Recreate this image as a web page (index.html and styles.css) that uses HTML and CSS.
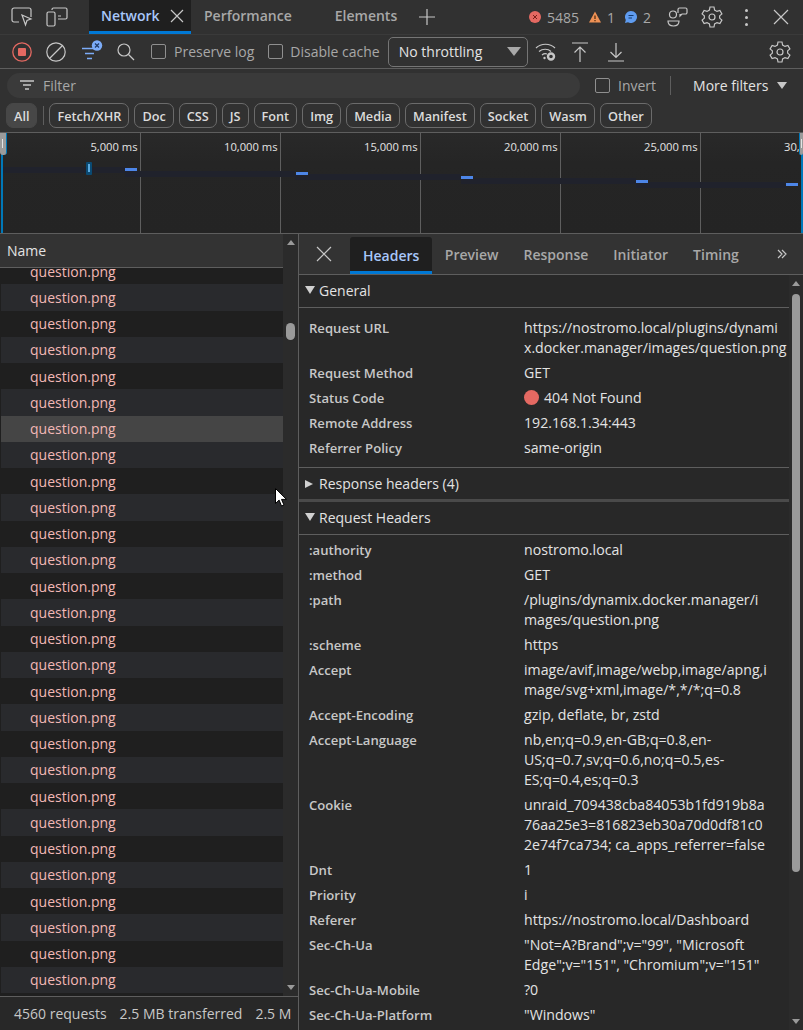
FILE: index.html
```html
<!DOCTYPE html>
<html lang="en">
<head>
<meta charset="UTF-8">
<meta name="viewport" content="width=device-width, initial-scale=1.0">
<link rel="stylesheet" href="styles.css">
<title>DevTools Network</title>
</head>
<body>
<div class="devtools">

  <!-- Main tab strip -->
  <div class="topbar">
    <svg class="ico ico-inspect" viewBox="0 0 22 20"><path d="M8 15H3a2 2 0 0 1-2-2V3a2 2 0 0 1 2-2h15a2 2 0 0 1 2 2v7"/><path d="M11 8l9 4-4 1.500-1.500 4.500z"/></svg>
    <svg class="ico ico-device" viewBox="0 0 22 20"><rect x="1" y="5" width="8" height="14" rx="1.500"/><path d="M6 3V2.500A1.500 1.500 0 0 1 7.500 1h12A1.500 1.500 0 0 1 21 2.500v8a1.500 1.500 0 0 1-1.500 1.500H12M12 9h3"/></svg>
    <div class="maintab active"><span>Network</span><svg class="ico ico-x14" viewBox="0 0 14 14"><path d="M1 1l12 12M13 1L1 13"/></svg></div>
    <div class="maintab perf">Performance</div>
    <div class="maintab elems">Elements</div>
    <svg class="ico ico-plus" viewBox="0 0 18 18"><path d="M9 1v16M1 9h16"/></svg>
    <div class="counts">
      <svg class="cnt-ico" viewBox="0 0 12 12"><circle cx="6" cy="6" r="6" fill="#e46962"/><path d="M4 4l4 4M8 4l-4 4" stroke="#7a1f1a" stroke-width="1"/></svg>
      <span class="cnt c1">5485</span>
      <svg class="cnt-ico" viewBox="0 0 12 12"><path d="M6 .5L12 11.500H0z" fill="#ee9155"/><path d="M6 4.500v3.500M6 9v1.200" stroke="#4a2508" stroke-width="1.200"/></svg>
      <span class="cnt c2">1</span>
      <svg class="cnt-ico" viewBox="0 0 12 12"><path d="M6 0a6 6 0 1 1-3 11.200L0 12l.8-3A6 6 0 0 1 6 0z" fill="#5f9cf0"/><path d="M3.500 4.500h5M3.500 7h3.500" stroke="#123a70" stroke-width="1"/></svg>
      <span class="cnt c3">2</span>
    </div>
    <svg class="ico ico-people" viewBox="0 0 21 20"><circle cx="6" cy="7.500" r="3.500"/><path d="M1 14h11c0 3-2 5-5.500 5S1 17 1 14z"/><path d="M11 6V2.500A1.500 1.500 0 0 1 12.500 1h6A1.500 1.500 0 0 1 20 2.500v3A1.500 1.500 0 0 1 18.500 7H15l-2 2V7"/></svg>
    <svg class="ico ico-gear top-gear" viewBox="0 0 22 22"><path d="M9 1h4l.6 3 2.400 1.400 2.900-1 2 3.500-2.300 2a7 7 0 0 1 0 2.200l2.300 2-2 3.500-2.900-1L13.600 18 13 21H9l-.6-3L6 16.600l-2.900 1-2-3.500 2.300-2a7 7 0 0 1 0-2.200l-2.300-2 2-3.500 2.900 1L8.400 4z"/><circle cx="11" cy="11" r="3"/></svg>
    <div class="dots"><i></i><i></i><i></i></div>
    <svg class="ico ico-x16" viewBox="0 0 16 16"><path d="M1 1l14 14M15 1L1 15"/></svg>
  </div>

  <!-- Network toolbar -->
  <div class="toolbar">
    <svg class="tool rec" viewBox="0 0 20 20"><circle cx="10" cy="10" r="9.200" fill="none" stroke="#e46962" stroke-width="1.300"/><rect x="6" y="6" width="8" height="8" rx="1" fill="#e46962"/></svg>
    <svg class="ico tool clear" viewBox="0 0 20 20"><circle cx="10" cy="10" r="9.200"/><path d="M3.500 16.500l13-13"/></svg>
    <svg class="tool funnel" viewBox="0 0 22 20"><path d="M1 8.500h13M4 13.500h9M6 18.500h5" stroke="#7cacf8" stroke-width="1.300" fill="none"/><circle cx="16" cy="5.500" r="5.200" fill="#7cacf8"/><path d="M14 3.500l4 4M18 3.500l-4 4" stroke="#1f3a66" stroke-width="1.200"/></svg>
    <svg class="ico tool search" viewBox="0 0 18 18"><circle cx="7" cy="7" r="6"/><path d="M11.500 11.500L17 17"/></svg>
    <label class="check preserve"><i></i>Preserve log</label>
    <label class="check cache"><i></i>Disable cache</label>
    <div class="select">No throttling<b class="arrow"></b></div>
    <svg class="ico tool wifi" viewBox="0 0 22 20"><path d="M1 6c5-5 14-5 19 0M4 9.500c3.500-3 9-3 12 0M7 13c1.500-1.200 3.500-1.500 5-1"/><circle cx="9.500" cy="16" r="1.200" fill="#c7c7c7" stroke="none"/><circle cx="16" cy="14.500" r="3" fill="none" stroke-width="2.400"/></svg>
    <svg class="ico tool up" viewBox="0 0 16 20"><path d="M0 1h16M8 20V5M2.500 10.500L8 5l5.500 5.500"/></svg>
    <svg class="ico tool down" viewBox="0 0 16 20"><path d="M0 19h16M8 1v14M2.500 10L8 15.500 13.500 10"/></svg>
    <svg class="ico ico-gear tool-gear" viewBox="0 0 22 22"><path d="M9 1h4l.6 3 2.400 1.400 2.900-1 2 3.500-2.300 2a7 7 0 0 1 0 2.200l2.300 2-2 3.500-2.900-1L13.600 18 13 21H9l-.6-3L6 16.600l-2.900 1-2-3.500 2.300-2a7 7 0 0 1 0-2.200l-2.300-2 2-3.500 2.900 1L8.400 4z"/><circle cx="11" cy="11" r="3"/></svg>
  </div>

  <!-- Filter row -->
  <div class="filterbar">
    <div class="filterinput">
      <svg class="ico ico-filter" viewBox="0 0 14 10"><path d="M0 1h14M3 5h8M5 9h4"/></svg>
      <span>Filter</span>
    </div>
    <label class="check invert"><i></i>Invert</label>
    <span class="vsep"></span>
    <span class="morefilters">More filters</span>
    <b class="arrow small"></b>
  </div>

  <!-- Type chips -->
  <div class="chips">
    <span class="chip all">All</span>
    <span class="chipsep"></span>
    <span class="chip">Fetch/XHR</span>
    <span class="chip">Doc</span>
    <span class="chip">CSS</span>
    <span class="chip">JS</span>
    <span class="chip">Font</span>
    <span class="chip">Img</span>
    <span class="chip">Media</span>
    <span class="chip">Manifest</span>
    <span class="chip">Socket</span>
    <span class="chip">Wasm</span>
    <span class="chip">Other</span>
  </div>

  <!-- Timeline overview -->
  <div class="overview">
    <div class="tick" style="left:140px"><span>5,000 ms</span></div>
    <div class="tick" style="left:280px"><span>10,000 ms</span></div>
    <div class="tick" style="left:420px"><span>15,000 ms</span></div>
    <div class="tick" style="left:560px"><span>20,000 ms</span></div>
    <div class="tick" style="left:700px"><span>25,000 ms</span></div>
    <div class="tick last" style="left:800px"><span>30,000 ms</span></div>

    <div class="track" style="left:3px;top:34px;width:122px"></div>
    <div class="track" style="left:125px;top:38px;width:170px"></div>
    <div class="track" style="left:295px;top:41px;width:166px"></div>
    <div class="track" style="left:461px;top:45px;width:175px"></div>
    <div class="track" style="left:636px;top:49px;width:150px"></div>

    <div class="burst"><i></i></div>
    <div class="bar" style="left:125px;top:35px"></div>
    <div class="bar" style="left:296px;top:39px"></div>
    <div class="bar" style="left:461px;top:43px"></div>
    <div class="bar" style="left:636px;top:47px"></div>
    <div class="bar" style="left:786px;top:50px"></div>

    <div class="edge left"></div>
    <div class="edge right"></div>
    <div class="grip left"><i></i></div>
    <div class="grip right"><i></i></div>
  </div>

  <div class="split">

    <!-- Request list -->
    <div class="leftpane">
      <div class="listarea">
        <div class="listcol">
          <div class="namehead">Name</div>
          <div class="rows">
            <div class="row">question.png</div>
            <div class="row">question.png</div>
            <div class="row">question.png</div>
            <div class="row">question.png</div>
            <div class="row">question.png</div>
            <div class="row">question.png</div>
            <div class="row selected">question.png</div>
            <div class="row">question.png</div>
            <div class="row">question.png</div>
            <div class="row">question.png</div>
            <div class="row">question.png</div>
            <div class="row">question.png</div>
            <div class="row">question.png</div>
            <div class="row">question.png</div>
            <div class="row">question.png</div>
            <div class="row">question.png</div>
            <div class="row">question.png</div>
            <div class="row">question.png</div>
            <div class="row">question.png</div>
            <div class="row">question.png</div>
            <div class="row">question.png</div>
            <div class="row">question.png</div>
            <div class="row">question.png</div>
            <div class="row">question.png</div>
            <div class="row">question.png</div>
            <div class="row">question.png</div>
            <div class="row">question.png</div>
            <div class="row">question.png</div>
          </div>
        </div>
        <div class="scrollbar listscroll">
          <b class="sb-up"></b>
          <div class="sb-space"><div class="thumb"></div></div>
          <b class="sb-down"></b>
        </div>
      </div>
      <div class="summary"><span>4560 requests</span><span>2.5 MB transferred</span><span>2.5 M</span></div>
    </div>

    <!-- Request details -->
    <div class="rightpane">
      <div class="detailtabs">
        <svg class="ico ico-x16 closedetail" viewBox="0 0 16 16"><path d="M1 1l14 14M15 1L1 15"/></svg>
        <div class="dtab active">Headers</div>
        <div class="dtab">Preview</div>
        <div class="dtab">Response</div>
        <div class="dtab">Initiator</div>
        <div class="dtab">Timing</div>
        <svg class="ico ico-more" viewBox="0 0 10 10"><path d="M1 1l4 4-4 4M5 1l4 4-4 4"/></svg>
      </div>
      <div class="detailbody">
        <div class="headers">

          <div class="sechead"><b class="tri"></b>General</div>
          <div class="kvlist general">
            <div class="kv"><span class="k">Request URL</span><span class="v">https://nostromo.local/plugins/dynami<br>x.docker.manager/images/question.png</span></div>
            <div class="kv"><span class="k">Request Method</span><span class="v">GET</span></div>
            <div class="kv"><span class="k">Status Code</span><span class="v"><i class="dot"></i>404 Not Found</span></div>
            <div class="kv"><span class="k">Remote Address</span><span class="v">192.168.1.34:443</span></div>
            <div class="kv"><span class="k">Referrer Policy</span><span class="v">same-origin</span></div>
          </div>

          <div class="sechead closed"><b class="tri right"></b>Response headers (4)</div>

          <div class="sechead"><b class="tri"></b>Request Headers</div>
          <div class="kvlist request">
            <div class="kv"><span class="k">:authority</span><span class="v">nostromo.local</span></div>
            <div class="kv"><span class="k">:method</span><span class="v">GET</span></div>
            <div class="kv"><span class="k">:path</span><span class="v">/plugins/dynamix.docker.manager/i<br>mages/question.png</span></div>
            <div class="kv"><span class="k">:scheme</span><span class="v">https</span></div>
            <div class="kv"><span class="k">Accept</span><span class="v">image/avif,image/webp,image/apng,i<br>mage/svg+xml,image/*,*/*;q=0.8</span></div>
            <div class="kv"><span class="k">Accept-Encoding</span><span class="v">gzip, deflate, br, zstd</span></div>
            <div class="kv"><span class="k">Accept-Language</span><span class="v">nb,en;q=0.9,en-GB;q=0.8,en-<br>US;q=0.7,sv;q=0.6,no;q=0.5,es-<br>ES;q=0.4,es;q=0.3</span></div>
            <div class="kv"><span class="k">Cookie</span><span class="v">unraid_709438cba84053b1fd919b8a<br>76aa25e3=816823eb30a70d0df81c0<br>2e74f7ca734; ca_apps_referrer=false</span></div>
            <div class="kv"><span class="k">Dnt</span><span class="v">1</span></div>
            <div class="kv"><span class="k">Priority</span><span class="v">i</span></div>
            <div class="kv"><span class="k">Referer</span><span class="v">https://nostromo.local/Dashboard</span></div>
            <div class="kv"><span class="k">Sec-Ch-Ua</span><span class="v">"Not=A?Brand";v="99", "Microsoft<br>Edge";v="151", "Chromium";v="151"</span></div>
            <div class="kv"><span class="k">Sec-Ch-Ua-Mobile</span><span class="v">?0</span></div>
            <div class="kv"><span class="k">Sec-Ch-Ua-Platform</span><span class="v">"Windows"</span></div>
          </div>
        </div>
        <div class="scrollbar detailscroll">
          <b class="sb-up"></b>
          <div class="sb-space"><div class="thumb"></div></div>
          <b class="sb-down"></b>
        </div>
      </div>
    </div>
  </div>

  <svg class="pointer" viewBox="0 0 12 19"><path d="M.5.5v15l3.600-3.400 2.400 5.900 2.500-1-2.500-5.600h5z" fill="#fff" stroke="#000" stroke-width="1"/></svg>
</div>
</body>
</html>
```

FILE: styles.css
```css
* {
  box-sizing: border-box;
}

html, body {
  margin: 0;
  height: 100%;
}

body {
  background: #282828;
  color: #e3e3e3;
  font-family: "Open Sans", "Noto Sans", sans-serif;
  font-size: 14px;
  overflow: hidden;
}

.devtools {
  position: relative;
  display: flex;
  flex-direction: column;
  width: 803px;
  height: 1030px;
  overflow: hidden;
}

.ico {
  fill: none;
  stroke: #c7c7c7;
  stroke-width: 1.200;
  flex: none;
}

/* top strip */
.topbar {
  display: flex;
  align-items: center;
  height: 35px;
  background: #313131;
  border-bottom: 1px solid #3a3a3a;
  padding-left: 11px;
  flex: none;
}

.ico-inspect {
  width: 22px;
  height: 20px;
}

.ico-device {
  width: 22px;
  height: 20px;
  margin-left: 13px;
}

.maintab {
  display: flex;
  align-items: center;
  height: 34px;
  padding-bottom: 3px;
  color: #a8a8a8;
  font-weight: 600;
}

.maintab.active {
  width: 102px;
  margin-left: 21px;
  padding: 0 0 0 12px;
  background: #1f1f1f;
  border-bottom: 3px solid #0078d4;
  color: #a8c7fa;
}

.maintab.active svg {
  margin-left: 10px;
}

.ico-x14 {
  width: 14px;
  height: 14px;
}

.maintab.perf {
  margin-left: 13px;
}

.maintab.elems {
  margin-left: 43px;
}

.ico-plus {
  width: 18px;
  height: 18px;
  margin-left: 21px;
}

.counts {
  display: flex;
  align-items: center;
  margin-left: auto;
  color: #a8a8a8;
}

.cnt-ico {
  width: 12px;
  height: 12px;
  flex: none;
}

.cnt {
  margin-left: 6px;
  margin-right: 10px;
}

.ico-people {
  width: 21px;
  height: 20px;
  margin-left: 6px;
}

.top-gear {
  margin-left: 13px;
}

.ico-gear {
  width: 22px;
  height: 22px;
}

.dots {
  display: flex;
  flex-direction: column;
  gap: 4px;
  margin-left: 22px;
}

.dots i {
  display: block;
  width: 3px;
  height: 3px;
  border-radius: 50%;
  background: #c7c7c7;
}

.ico-x16 {
  width: 16px;
  height: 16px;
}

.topbar .ico-x16 {
  margin-left: 25px;
  margin-right: 14px;
}

/* toolbar */
.toolbar {
  display: flex;
  align-items: center;
  height: 34px;
  background: #313131;
  border-bottom: 1px solid #5e5e5e;
  padding-left: 12px;
  flex: none;
}

.tool {
  flex: none;
}

.rec {
  width: 20px;
  height: 20px;
}

.clear {
  width: 20px;
  height: 20px;
  margin-left: 14px;
}

.funnel {
  width: 22px;
  height: 20px;
  margin-left: 15px;
  margin-top: -3px;
}

.search {
  width: 18px;
  height: 18px;
  margin-left: 14px;
}

.check {
  display: flex;
  align-items: center;
  color: #a8a8a8;
}

.check i {
  display: block;
  width: 15px;
  height: 15px;
  border: 1px solid #8f8f8f;
  border-radius: 2px;
  margin-right: 8px;
  flex: none;
}

.preserve {
  margin-left: 16px;
}

.cache {
  margin-left: 14px;
}

.cache i {
  margin-right: 7px;
}

.select {
  display: flex;
  align-items: center;
  width: 140px;
  height: 30px;
  margin-left: 8px;
  padding-left: 10px;
  border: 1px solid #757575;
  border-radius: 5px;
  color: #e3e3e3;
}

.arrow {
  display: block;
  width: 0;
  height: 0;
  border-left: 7px solid transparent;
  border-right: 7px solid transparent;
  border-top: 9px solid #a8a8a8;
}

.select .arrow {
  margin-left: auto;
  margin-right: 6px;
}

.wifi {
  width: 22px;
  height: 20px;
  margin-left: 7px;
}

.up {
  width: 16px;
  height: 20px;
  margin-left: 15px;
}

.down {
  width: 16px;
  height: 20px;
  margin-left: 20px;
}

.tool-gear {
  margin-left: auto;
  margin-right: 12px;
}

/* filter row */
.filterbar {
  display: flex;
  align-items: center;
  height: 32px;
  background: #313131;
  padding-left: 7px;
  flex: none;
}

.filterinput {
  display: flex;
  align-items: center;
  width: 573px;
  height: 25px;
  padding-left: 13px;
  border-radius: 13px;
  background: #3a3a3a;
  color: #a8a8a8;
}

.ico-filter {
  width: 14px;
  height: 10px;
  margin-right: 9px;
  stroke-width: 1.400;
}

.invert {
  margin-left: 15px;
}

.vsep {
  width: 1px;
  height: 19px;
  margin-left: 14px;
  background: #5e5e5e;
}

.morefilters {
  margin-left: 22px;
  color: #e3e3e3;
}

.arrow.small {
  margin-left: 9px;
  border-left-width: 5.500px;
  border-right-width: 5.500px;
  border-top-width: 7px;
  border-top-color: #c7c7c7;
}

/* chips */
.chips {
  display: flex;
  align-items: center;
  height: 32px;
  background: #313131;
  border-bottom: 1px solid #5e5e5e;
  padding-left: 6px;
  padding-bottom: 2px;
  gap: 5px;
  flex: none;
}

.chip {
  display: flex;
  align-items: center;
  height: 25px;
  padding: 0 7px;
  border: 1px solid #6b6b6b;
  border-radius: 7px;
  font-size: 12.700px;
  font-weight: 600;
  color: #dcdcdc;
}

.chip.all {
  background: #474747;
  border-color: #474747;
}

.chipsep {
  width: 1px;
  height: 19px;
  background: #5e5e5e;
  margin: 0 0 0 1px;
}

/* overview */
.overview {
  position: relative;
  height: 100px;
  background: linear-gradient(#292929 0, #252525 30%, #242424 100%);
  flex: none;
  overflow: hidden;
}

.tick {
  position: absolute;
  top: 0;
  bottom: 0;
  width: 1px;
  background: #5e5e5e;
}

.tick span {
  position: absolute;
  right: 3.500px;
  top: 6px;
  font-size: 11.200px;
  color: #e3e3e3;
  white-space: nowrap;
}

.tick.last {
  background: none;
}

.tick.last span {
  right: auto;
  left: -16px;
}

.track {
  position: absolute;
  height: 6px;
  background: #20222c;
}

.bar {
  position: absolute;
  width: 12px;
  height: 3px;
  background: #4d86e8;
}

.burst {
  position: absolute;
  left: 86px;
  top: 29px;
  width: 6px;
  height: 13px;
  padding: 2px 2px;
  border-radius: 1px;
  background: #0a4a73;
}

.burst i {
  display: block;
  width: 2px;
  height: 8px;
  background: #5aa9de;
}

.edge {
  position: absolute;
  top: 0;
  bottom: 0;
  width: 2px;
  background: #0078b8;
}

.edge.left {
  left: 1px;
}

.edge.right {
  right: 0;
}

.grip {
  position: absolute;
  top: 0;
  width: 7px;
  height: 22px;
  background: #9b9b9b;
  border-radius: 0 0 3px 3px;
  padding: 6px 0 0 2px;
}

.grip i {
  display: block;
  width: 1px;
  height: 9px;
  background: #e3e3e3;
}

.grip.left {
  left: 0;
  border-right: 1px solid #0078b8;
}

.grip.right {
  right: 0;
  width: 4px;
  border-left: 1px solid #0078b8;
  padding-left: 1px;
}

/* split */
.split {
  display: flex;
  flex: 1;
  min-height: 0;
  border-top: 1px solid #5e5e5e;
}

.leftpane {
  display: flex;
  flex-direction: column;
  width: 299px;
  border-right: 1px solid #5e5e5e;
  flex: none;
}

.listarea {
  display: flex;
  flex: 1;
  min-height: 0;
}

.listcol {
  display: flex;
  flex-direction: column;
  width: 283px;
  flex: none;
  min-height: 0;
}

.namehead {
  display: flex;
  align-items: center;
  height: 34px;
  padding-left: 7px;
  background: #333;
  border-bottom: 1px solid #5e5e5e;
  flex: none;
}

.rows {
  flex: 1;
  min-height: 0;
  overflow: hidden;
  background: #1f1f1f;
}

.row {
  display: flex;
  align-items: center;
  height: 26.250px;
  padding-left: 29px;
  background: #1f1f1f;
  color: #f2b8b5;
  margin-left: 1px;
}

.rows .row:first-child {
  margin-top: -10px;
}

.row:nth-child(even) {
  background: #292a2d;
}

.row.selected {
  background: #454545;
}

.scrollbar {
  display: flex;
  flex-direction: column;
  align-items: center;
  flex: none;
  background: #2b2b2b;
}

.listscroll {
  width: 15px;
}

.detailscroll {
  width: 14px;
}

.sb-up,
.sb-down {
  display: block;
  width: 0;
  height: 0;
  margin: 6px 0;
  border-left: 4.500px solid transparent;
  border-right: 4.500px solid transparent;
  flex: none;
}

.sb-up {
  border-bottom: 5px solid #9a9a9a;
}

.sb-down {
  border-top: 5px solid #9a9a9a;
}

.sb-space {
  flex: 1;
  width: 100%;
  padding: 0 3px;
}

.thumb {
  border-radius: 5px;
  background: #9a9a9a;
}

.listscroll .thumb {
  height: 17px;
  margin-top: 72px;
}

.detailscroll .thumb {
  height: 578px;
  margin-top: 2px;
}

.summary {
  display: flex;
  align-items: center;
  gap: 13px;
  height: 34px;
  padding-left: 14px;
  border-top: 1px solid #5e5e5e;
  color: #c7c7c7;
  white-space: nowrap;
  overflow: hidden;
  flex: none;
}

/* details */
.rightpane {
  display: flex;
  flex-direction: column;
  flex: 1;
  min-width: 0;
}

.detailtabs {
  display: flex;
  align-items: flex-end;
  height: 41px;
  background: #333;
  border-bottom: 1px solid #5e5e5e;
  flex: none;
}

.closedetail {
  align-self: center;
  margin-left: 17px;
  margin-right: 18px;
}

.dtab {
  display: flex;
  align-items: center;
  height: 37px;
  padding: 1px 12.500px 3px;
  color: #a8a8a8;
  font-weight: 600;
}

.dtab.active {
  padding: 2px 13px 0;
  background: #1f1f1f;
  border-bottom: 3px solid #0078d4;
  border-radius: 3px 3px 0 0;
  color: #a8c7fa;
}

.ico-more {
  align-self: center;
  width: 10px;
  height: 10px;
  margin-left: auto;
  margin-right: 16px;
}

.detailbody {
  display: flex;
  flex: 1;
  min-height: 0;
}

.headers {
  flex: 1;
  min-width: 0;
  overflow: hidden;
  background: #282828;
}

.sechead {
  display: flex;
  align-items: center;
  height: 33px;
  padding-left: 6px;
  padding-bottom: 2px;
  border-bottom: 1px solid #5e5e5e;
  color: #e3e3e3;
}

.sechead.closed {
  border-bottom-width: 3px;
  border-bottom-color: #4a4a4a;
  height: 34px;
  padding-bottom: 0;
}

.tri {
  display: block;
  width: 0;
  height: 0;
  margin-right: 4px;
  border-left: 5px solid transparent;
  border-right: 5px solid transparent;
  border-top: 8px solid #d0d0d0;
}

.tri.right {
  margin-right: 6px;
  border-top: 4.500px solid transparent;
  border-bottom: 4.500px solid transparent;
  border-left: 8px solid #d0d0d0;
  border-right: 0;
}

.kvlist {
  padding-top: 2px;
  border-bottom: 1px solid #5e5e5e;
}

.kvlist.general {
  padding-top: 7px;
  padding-bottom: 7px;
}

.kvlist.request {
  border-bottom: 0;
  padding-top: 2px;
}

.kv {
  display: flex;
  padding: 2.500px 0 2.500px 10px;
  line-height: 20px;
  white-space: nowrap;
}

.k {
  width: 215px;
  flex: none;
  color: #c7c7c7;
  font-weight: 600;
  font-size: 13.100px;
}

.v {
  color: #e3e3e3;
  font-size: 14.150px;
}

.dot {
  display: inline-block;
  width: 15px;
  height: 15px;
  margin-right: 5px;
  border-radius: 50%;
  background: #e46962;
  vertical-align: -2px;
}

.pointer {
  position: absolute;
  left: 275px;
  top: 488px;
  width: 12px;
  height: 19px;
}
```
